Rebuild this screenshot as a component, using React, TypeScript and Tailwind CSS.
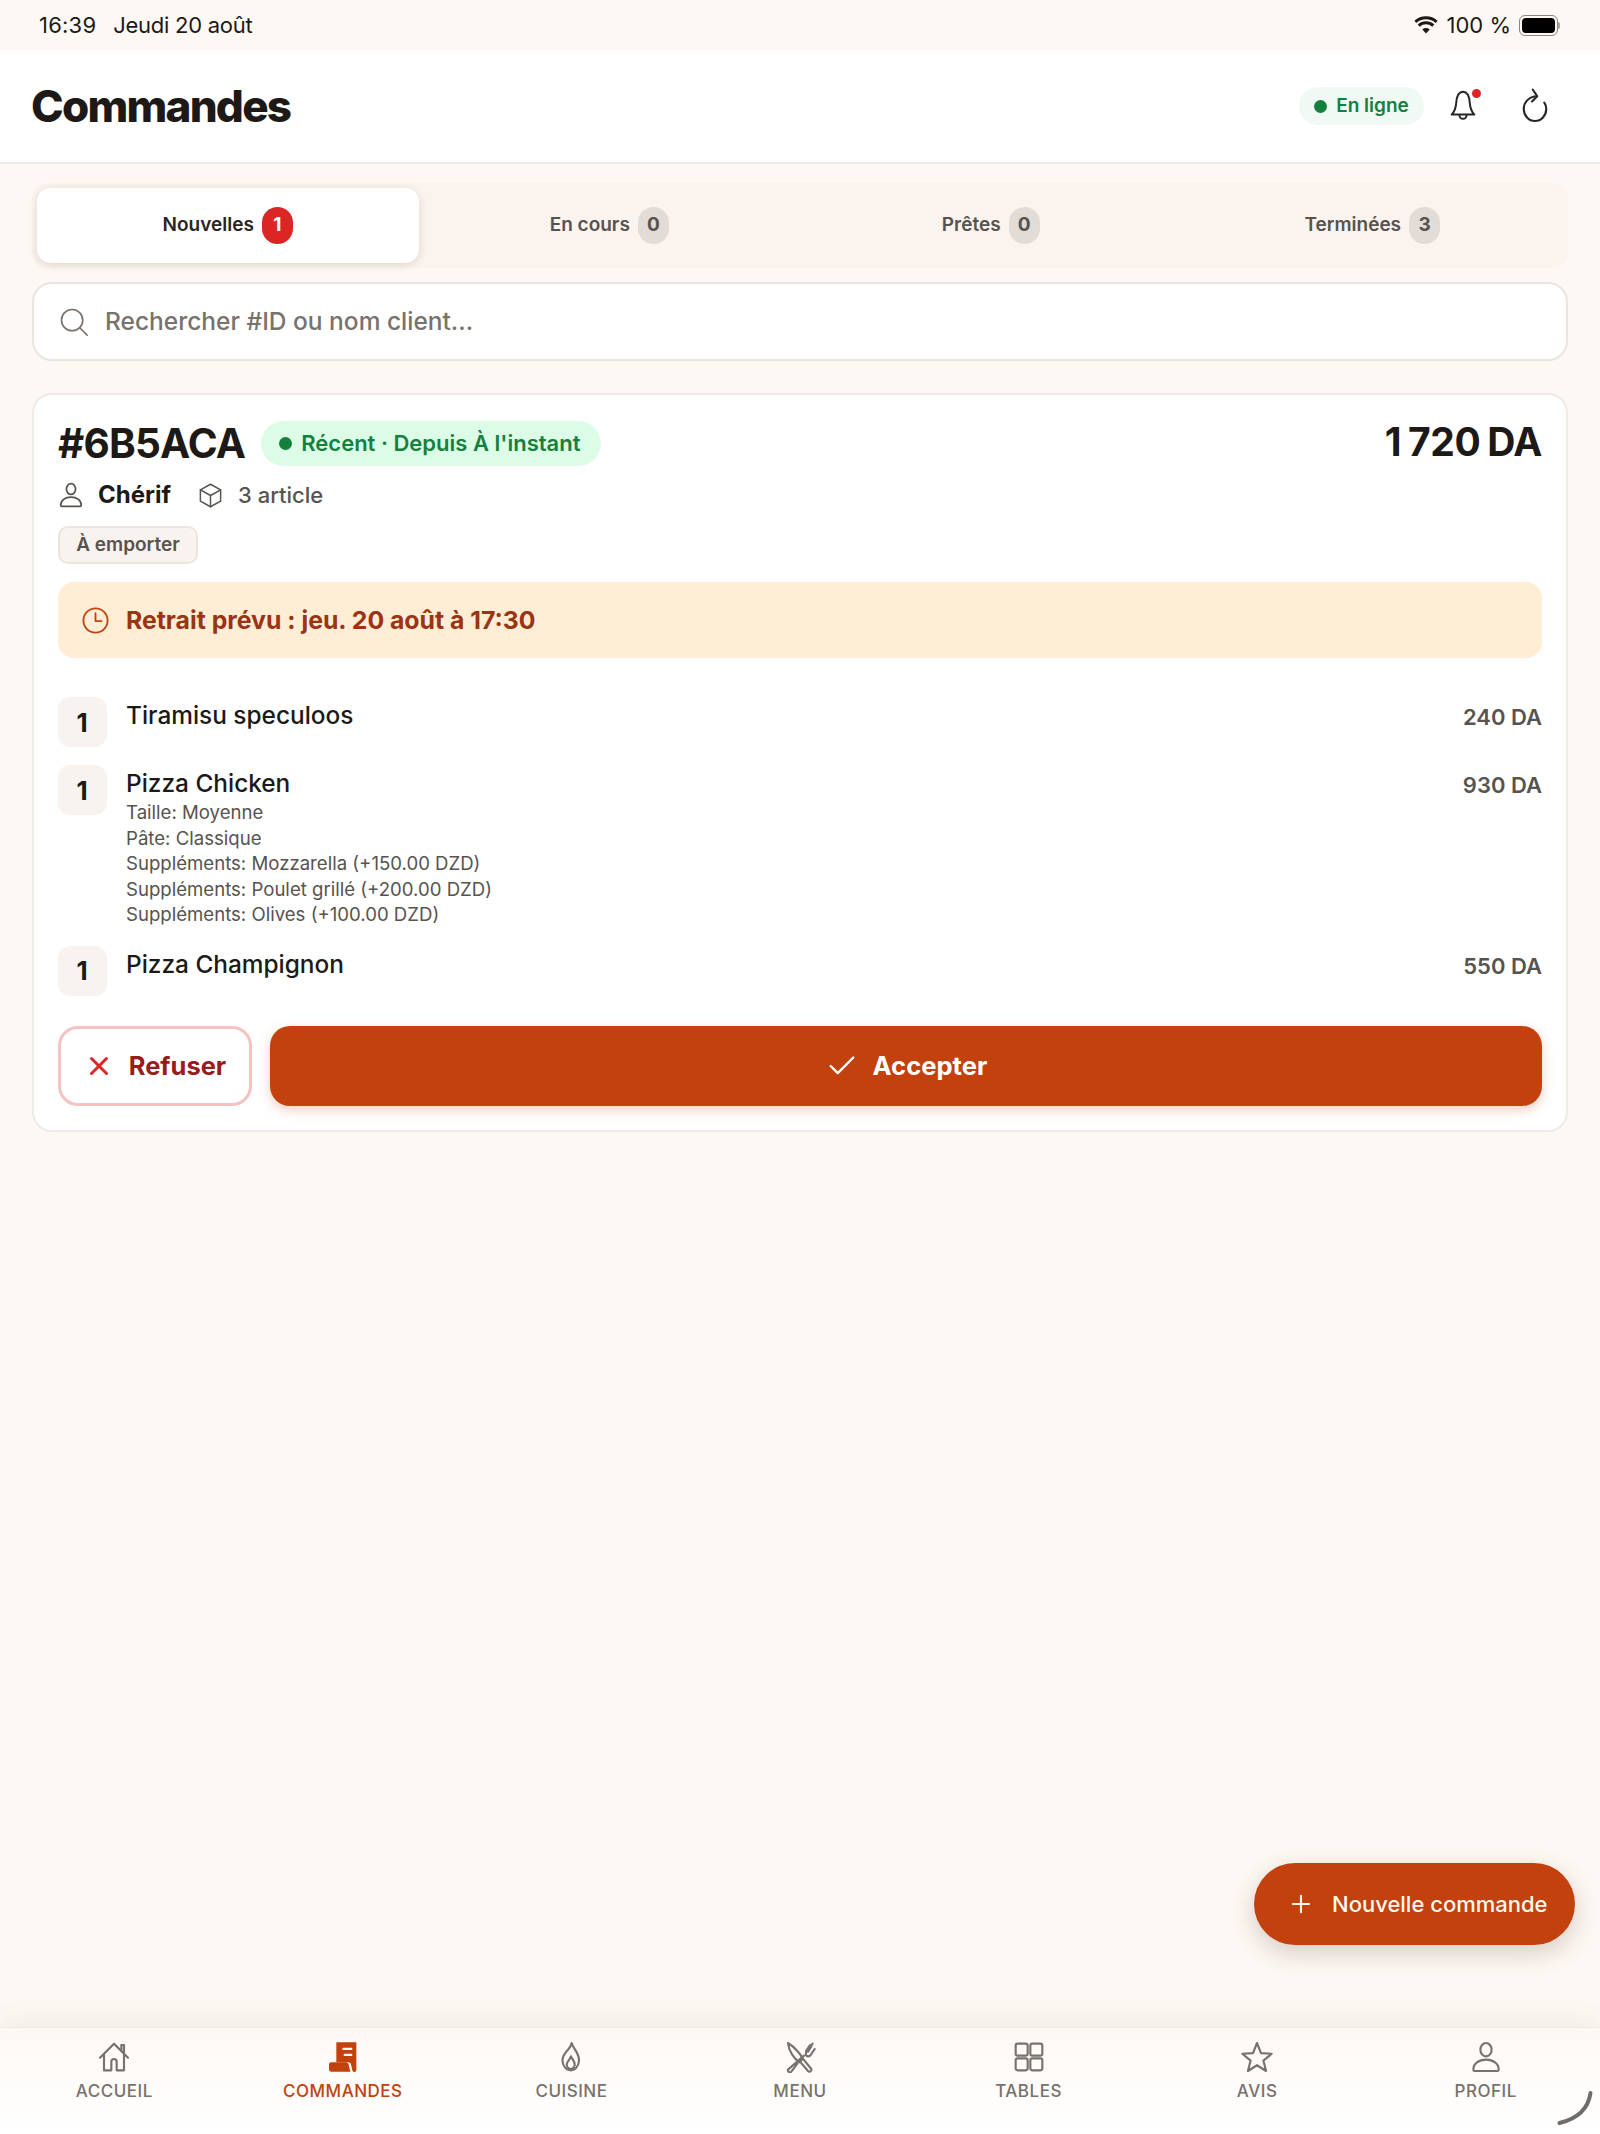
import { Check, Plus, X } from 'lucide-react'
import type { ReactNode } from 'react'

function Svg({ className, children, sw = 1.6 }: { className?: string; children: ReactNode; sw?: number }) {
  return (
    <svg viewBox="0 0 24 24" fill="none" stroke="currentColor" strokeWidth={sw} strokeLinecap="round" strokeLinejoin="round" className={className}>
      {children}
    </svg>
  )
}

const HomeIcon = () => (
  <Svg className="w-[32px] h-[32px]">
    <path d="M1.5 12.5 12 2l10.5 10.5" />
    <path d="M17.5 7.5V3h2v6.5" />
    <path d="M4.5 10.5V22h5.5v-6.5a2 2 0 0 1 4 0V22h5.5V10.5" />
  </Svg>
)

const OrdersIcon = () => (
  <svg viewBox="0 0 24 24" className="w-[34px] h-[32px] text-[#c2410c]" fill="currentColor">
    <path d="M7 1h15v20.5a1.5 1.5 0 0 1-3 .4c-.4-1.500-.6-3-1-4.400-.3-1-1-1.500-2-1.500H7z" />
    <path d="M3 16h11c1.500 0 2 .8 2.300 2l.9 4c.1.500.3.8.5 1H3.500A2 2 0 0 1 1.500 21v-3.500A1.500 1.500 0 0 1 3 16z" />
    <rect x="11.500" y="5" width="7.500" height="1.800" rx=".6" fill="#fdf9f6" />
    <rect x="12.500" y="9.500" width="6.500" height="1.800" rx=".6" fill="#fdf9f6" />
  </svg>
)

const FlameIcon = () => (
  <Svg className="w-[32px] h-[32px]">
    <path d="M12.500 1.500c.8 4 5.500 7 5.500 13a6.200 7.500 0 0 1-12.400 0c0-3 1.400-4.500 2.900-6.500 1.700-2.200 3.500-3.500 4-6.500z" />
    <path d="M12 11.500c.6 2 2.800 3.500 2.800 6a3 3.500 0 0 1-6 0c0-2 2.500-3.500 3.200-6z" />
  </Svg>
)

const MenuIcon = () => (
  <Svg className="w-[32px] h-[32px]">
    <path d="M3 1.500c5 3 10 9 11 12l-2.500 2.500C8 13.500 3.500 8 3 1.500z" />
    <path d="M14 13l6.500 8a1.500 1.500 0 0 1-2.500 1.500l-6-7" />
    <path d="M21.500 2 17 8c-.8 1.200-.8 2.200-.2 3 .8.700 1.800.700 3-.2L23 6" />
    <path d="m19.500 3-3 4.500M20.500 4 18 8" />
    <path d="M15 11 3 21.500a1.500 1.500 0 0 0 2.500 1.500L10 17" />
  </Svg>
)

const TablesIcon = () => (
  <Svg className="w-[32px] h-[32px]">
    <rect x="2" y="2" width="9" height="9" rx="1.500" />
    <rect x="13" y="2" width="9" height="9" rx="1.500" />
    <rect x="2" y="13" width="9" height="9" rx="1.500" />
    <rect x="13" y="13" width="9" height="9" rx="1.500" />
  </Svg>
)

const StarIcon = () => (
  <Svg className="w-[34px] h-[32px]">
    <path d="m12 1.500 3 7.600 8 .5-6.200 5.100 2 7.800L12 18.200l-6.800 4.300 2-7.800L1 9.600l8-.5z" />
  </Svg>
)

const ProfileIcon = ({ className }: { className: string }) => (
  <Svg className={className}>
    <ellipse cx="12" cy="6.500" rx="4.200" ry="5" />
    <path d="M2.500 21.500c0-4.500 4-7.500 9.500-7.500s9.500 3 9.500 7.500c0 .6-.4 1-1 1h-17c-.6 0-1-.4-1-1z" />
  </Svg>
)

const tabs = [
  { label: 'Nouvelles', count: 1, active: true },
  { label: 'En cours', count: 0 },
  { label: 'Prêtes', count: 0 },
  { label: 'Terminées', count: 3 },
]

const items = [
  { name: 'Tiramisu speculoos', price: '240 DA', options: [] as string[] },
  {
    name: 'Pizza Chicken',
    price: '930 DA',
    options: [
      'Taille: Moyenne',
      'Pâte: Classique',
      'Suppléments: Mozzarella (+150.00 DZD)',
      'Suppléments: Poulet grillé (+200.00 DZD)',
      'Suppléments: Olives (+100.00 DZD)',
    ],
  },
  { name: 'Pizza Champignon', price: '550 DA', options: [] as string[] },
]

const navItems = [
  { label: 'ACCUEIL', icon: <HomeIcon /> },
  { label: 'COMMANDES', icon: <OrdersIcon />, active: true },
  { label: 'CUISINE', icon: <FlameIcon /> },
  { label: 'MENU', icon: <MenuIcon /> },
  { label: 'TABLES', icon: <TablesIcon /> },
  { label: 'AVIS', icon: <StarIcon /> },
  { label: 'PROFIL', icon: <ProfileIcon className="w-[32px] h-[32px]" /> },
]

export default function App() {
  return (
    <div className="relative w-[1600px] h-[2134px] overflow-hidden flex flex-col bg-[#fdf8f3] text-[#1c1917] [font-family:Inter,sans-serif]">
      {/* status bar */}
      <div className="h-[50px] shrink-0 flex items-center justify-between pl-[39px] pr-[40px] text-[22px] text-[#1c1917]">
        <div className="flex gap-[17px]">
          <span className="tracking-[0.01em]">16:39</span>
          <span className="tracking-[-0.012em]">Jeudi 20 août</span>
        </div>
        <div className="flex items-center">
          <svg viewBox="0 0 24 18" className="w-[24px] h-[18px] mr-[9px]" fill="currentColor">
            <path d="M12 17.500 8.300 13.400a5.500 5.500 0 0 1 7.400 0z" />
            <path d="M5.800 10.700 3.700 8.400a12.500 12.500 0 0 1 16.600 0l-2.100 2.300a9.300 9.300 0 0 0-12.400 0z" />
            <path d="M2.300 6.900.4 4.700a17.500 17.500 0 0 1 23.200 0l-1.900 2.200a14.500 14.500 0 0 0-19.400 0z" />
          </svg>
          <span>100 %</span>
          <div className="ml-[8px] flex items-center">
            <div className="w-[39px] h-[21px] rounded-[6px] border border-[#8a8682] p-[2px]">
              <div className="w-full h-full rounded-[4px] bg-black" />
            </div>
            <div className="w-[2px] h-[7px] bg-[#a8a4a0] rounded-r-sm" />
          </div>
        </div>
      </div>

      {/* header */}
      <header className="h-[114px] shrink-0 bg-white border-b-2 border-[#efebe6] flex items-center justify-between pl-[31px] pr-[47px]">
        <h1 className="text-[44px] leading-none font-extrabold tracking-[-0.04em] text-[#1c1917]">Commandes</h1>
        <div className="flex items-center">
          <div className="h-[38px] w-[125px] rounded-full bg-[#f0f9f3] flex items-center justify-center gap-[9px] text-[19px] font-semibold text-[#15803d]">
            <span className="w-[13px] h-[13px] rounded-full bg-[#15803d]" />
            En ligne
          </div>
          <div className="relative ml-[22px] w-[32px] h-[36px] text-[#292524]">
            <Svg className="w-[34px] h-[36px]" sw={1.400}>
              <path d="M12 2c-3 0-4.500 3.500-4.800 8-.3 3.500-1 6-3.200 8h16c-2.200-2-2.900-4.500-3.200-8C16.500 5.500 15 2 12 2z" />
              <path d="M9.500 18.500a2.500 2.500 0 0 0 5 0" />
            </Svg>
            <span className="absolute top-[1px] right-[-3px] w-[9px] h-[9px] rounded-full bg-[#dc2626]" />
          </div>
          <div className="ml-[39px] text-[#292524]">
            <Svg className="w-[36px] h-[40px]" sw={1.400}>
              <path d="M12 5.500c-4.500 1-7.500 4.200-7.500 8.500a7.500 8 0 1 0 15 0c0-1.500-.4-3-1.300-4.200" />
              <path d="m10.500 1 3 4.500-3.500 3.500" />
            </Svg>
          </div>
        </div>
      </header>

      <main className="flex-1 px-[32px] pt-[19px]">
        {/* tabs */}
        <div className="h-[85px] rounded-[16px] bg-[#faf3ee] p-[5px] grid grid-cols-4">
          {tabs.map((t) => (
            <div
              key={t.label}
              className={`flex items-center justify-center gap-[8px] rounded-[14px] text-[19px] font-semibold ${
                t.active ? 'bg-white text-[#292524] shadow-[0_2px_8px_rgba(120,100,80,0.2)]' : 'text-[#57534e]'
              }`}
            >
              {t.label}
              <span
                className={`w-[31px] h-[37px] rounded-full flex items-center justify-center text-[19px] font-bold ${
                  t.active ? 'bg-[#dc2626] text-white' : 'bg-[#e2dcd7] text-[#57534e]'
                }`}
              >
                {t.count}
              </span>
            </div>
          ))}
        </div>

        {/* search */}
        <div className="mt-[14px] h-[79px] rounded-[20px] border-2 border-[#e9e4de] bg-white flex items-center pl-[25px]">
          <Svg className="w-[30px] h-[30px] text-[#78716c]" sw={1.300}>
            <circle cx="10.500" cy="10.500" r="8.500" />
            <path d="m17 17 5.500 5.500" />
          </Svg>
          <span className="ml-[16px] text-[24.5px] font-medium text-[#78716c]">Rechercher #ID ou nom client...</span>
        </div>

        {/* order card */}
        <section className="mt-[32px] rounded-[20px] border-2 border-[#eeebe7] bg-white px-[24px] pt-[26px] pb-[24px]">
          <div className="flex items-start justify-between">
            <div className="flex items-center gap-[16px]">
              <span className="text-[40.5px] leading-[45px] font-bold tracking-[-0.02em] text-[#1c1917]">#6B5ACA</span>
              <span className="h-[45px] rounded-full bg-[#dcfce7] pl-[18px] pr-[21px] flex items-center gap-[9px] text-[22px] font-semibold text-[#15803d]">
                <span className="w-[13px] h-[13px] rounded-full bg-[#15803d]" />
                Récent · Depuis À l'instant
              </span>
            </div>
            <span className="text-[39px] leading-[42px] font-bold text-[#1c1917] tracking-[-0.01em] [word-spacing:-2px]">1 720 DA</span>
          </div>

          <div className="mt-[12px] h-[34px] flex items-center">
            <ProfileIcon className="w-[26px] h-[26px] text-[#57534e]" />
            <span className="ml-[14px] text-[24px] font-bold text-[#1c1917]">Chérif</span>
            <Svg className="ml-[26px] w-[27px] h-[27px] text-[#57534e]" sw={1.300}>
              <path d="M12 2 21 7v10l-9 5-9-5V7z" />
              <path d="m3 7 9 5 9-5M12 12v10" />
            </Svg>
            <span className="ml-[14px] text-[22px] font-medium text-[#57534e]">3 article</span>
          </div>

          <div className="mt-[14px] w-[140px] h-[38px] rounded-[10px] border-2 border-[#ece5de] bg-[#f8f3ee] flex items-center justify-center text-[19px] font-semibold text-[#57534e]">
            À emporter
          </div>

          <div className="mt-[18px] h-[76px] rounded-[16px] bg-[#ffedd5] flex items-center pl-[23px] text-[#9a3412]">
            <Svg className="w-[29px] h-[29px] text-[#c2410c]" sw={1.500}>
              <circle cx="12" cy="12" r="10" />
              <path d="M12 6v6.500h5" />
            </Svg>
            <span className="ml-[16px] text-[24.8px] font-bold pt-[1px]">Retrait prévu : jeu. 20 août à 17:30</span>
          </div>

          <div className="mt-[39px] flex flex-col gap-[18px]">
            {items.map((item) => (
              <div key={item.name} className="flex items-start">
                <div className="w-[49px] h-[50px] rounded-[12px] bg-[#f8f3ee] flex items-center justify-center text-[26px] font-bold text-[#1c1917] pr-[1px]">
                  1
                </div>
                <div className="ml-[19px] flex-1">
                  <div className="text-[24.4px] leading-[33px] pt-[2px] font-medium text-[#1c1917]">{item.name}</div>
                  {item.options.map((o) => (
                    <div key={o} className="text-[18.6px] leading-[25.6px] text-[#57534e]">
                      {o}
                    </div>
                  ))}
                </div>
                <div className="text-[22px] leading-[40px] font-semibold text-[#57534e]">{item.price}</div>
              </div>
            ))}
          </div>

          <div className="mt-[30px] flex gap-[18px]">
            <button className="w-[194px] h-[80px] rounded-[20px] border-[3px] border-[#f5c2c2] bg-white flex items-center justify-center gap-[15px] text-[25.5px] font-bold text-[#991b1b]">
              <X className="w-[30px] h-[30px] text-[#dc2626]" strokeWidth={2.400} />
              Refuser
            </button>
            <button className="flex-1 h-[80px] rounded-[20px] bg-[#c2410c] shadow-[0_4px_12px_rgba(194,65,12,0.25)] flex items-center justify-center gap-[14px] text-[25.6px] font-bold text-white">
              <Check className="w-[34px] h-[34px]" strokeWidth={1.700} />
              Accepter
            </button>
          </div>
        </section>
      </main>

      {/* floating action */}
      <button className="absolute left-[1254px] top-[1863px] w-[321px] h-[82px] rounded-full bg-[#c2410c] shadow-[0_8px_24px_rgba(80,50,30,0.22)] flex items-center pl-[33px] text-[22px] font-medium text-[#fff7f0]">
        <Plus className="w-[28px] h-[28px]" strokeWidth={1.800} />
        <span className="ml-[17px]">Nouvelle commande</span>
      </button>

      {/* bottom nav */}
      <nav className="relative h-[107px] shrink-0 grid grid-cols-7 pt-[13px] border-t border-[#f0ebe6] bg-gradient-to-b from-[#fdf8f4] to-white shadow-[0_-10px_20px_rgba(120,100,80,0.06)]">
        {navItems.map((n) => (
          <div key={n.label} className={`flex flex-col items-center ${n.active ? 'text-[#c2410c]' : 'text-[#78716c]'}`}>
            {n.icon}
            <span className="mt-[6px] text-[17px] leading-[24px] font-medium tracking-[0.03em]">{n.label}</span>
          </div>
        ))}
      </nav>

      {/* home indicator corner */}
      <svg viewBox="0 0 36 36" className="absolute left-[1557px] top-[2090px] w-[36px] h-[36px]" fill="none">
        <path d="M33.500 3c-2 14-10 25-31 30" stroke="#6f6b68" strokeWidth="4" strokeLinecap="round" />
      </svg>
    </div>
  )
}
